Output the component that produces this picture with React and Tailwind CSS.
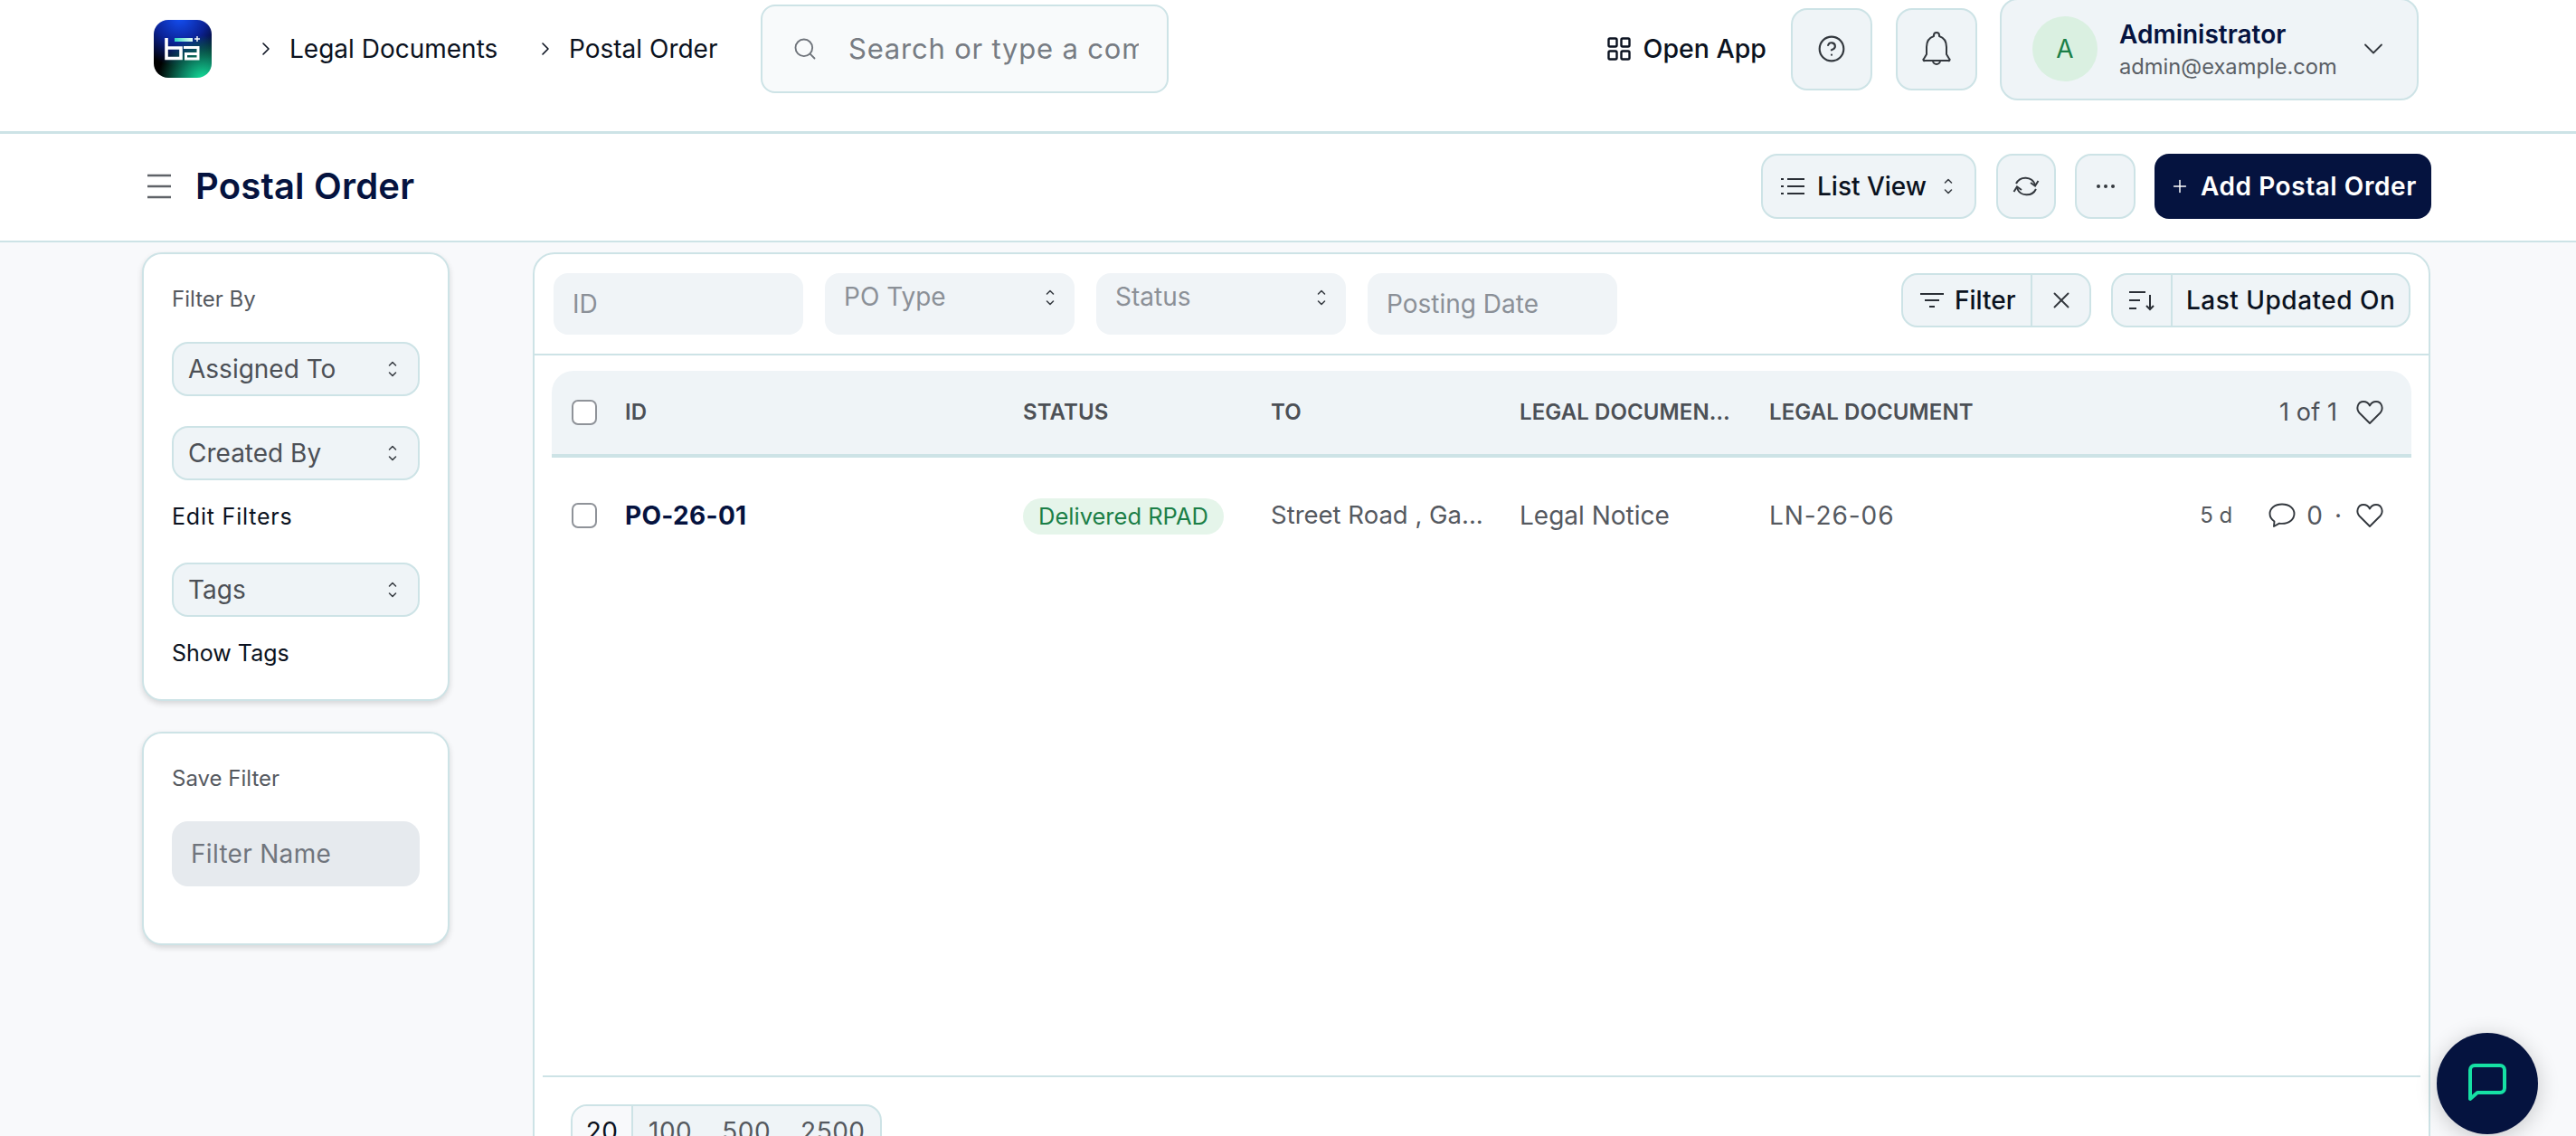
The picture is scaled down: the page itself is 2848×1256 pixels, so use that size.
import React from "react";
import { ChevronDown, ChevronRight, CircleHelp, Plus, Search, X } from "lucide-react";

const rows = [
	{
		id: "PO-26-01",
		status: "Delivered RPAD",
		to: "Street Road , Ga...",
		documentType: "Legal Notice",
		document: "LN-26-06",
		age: "5 d",
		comments: 0,
	},
];

function UpDown({ className }) {
	return (
		<svg viewBox="0 0 10 18" fill="none" stroke="currentColor" strokeWidth="1.6" strokeLinecap="round" strokeLinejoin="round" className={className}>
			<path d="M1.5 5L5 1.5L8.5 5" />
			<path d="M1.5 13L5 16.5L8.5 13" />
		</svg>
	);
}

function AppsIcon() {
	return (
		<svg viewBox="0 0 26 26" fill="none" stroke="#0b1220" strokeWidth="2.4" className="h-[26px] w-[26px] shrink-0">
			<rect x="1.5" y="1.5" width="9" height="9" rx="1.5" />
			<rect x="15.5" y="1.5" width="9" height="9" rx="1.5" />
			<rect x="1.5" y="15.5" width="9" height="9" rx="1.5" />
			<rect x="15.5" y="15.5" width="9" height="9" rx="1.5" />
		</svg>
	);
}

function BellIcon() {
	return (
		<svg viewBox="0 0 34 40" fill="none" stroke="#33383e" strokeWidth="2" strokeLinejoin="round" className="h-[40px] w-[34px]">
			<path d="M17 2c-1.500 0-3 1-3 3v1C8 8 6 12 6 18v8l-3 5a1 1 0 0 0 1 2h26a1 1 0 0 0 1-2l-3-5v-8c0-6-2-10-8-12V5c0-2-1.500-3-3-3z" />
			<path d="M13 33a4 4 0 0 0 8 0" />
		</svg>
	);
}

function SyncIcon() {
	return (
		<svg viewBox="0 0 30 26" fill="none" stroke="#33383e" strokeWidth="2" className="h-[26px] w-[30px]">
			<path d="M4 10A11.500 11.500 0 0 1 25 11" />
			<path d="M28.500 7L25 12.500L20 9" />
			<path d="M26 16A11.500 11.500 0 0 1 5 15" />
			<path d="M1.500 19L5 13.500L10 17" />
		</svg>
	);
}

function CommentIcon() {
	return (
		<svg viewBox="0 0 30 28" fill="none" stroke="#33383e" strokeWidth="1.9" strokeLinejoin="round" className="h-[28px] w-[30px] shrink-0">
			<path d="M15 1.500C7 1.500 1.500 6 1.500 12c0 3.500 2 6.500 5 8.500L6 26l6-3.300c1 .2 2 .2 3 .2 8 0 13.500-4.900 13.500-10.900S23 1.500 15 1.500z" />
		</svg>
	);
}

function HeartIcon() {
	return (
		<svg viewBox="0 0 30 28" fill="none" stroke="#33383e" strokeWidth="1.9" strokeLinejoin="round" className="h-[28px] w-[32px] shrink-0">
			<path d="M15 26L3.500 14.500C-.5 10 1.500 2 8 2c3.500 0 6 2.500 7 4.500C16 4.500 18.500 2 22 2c6.500 0 8.500 8 4.500 12.500z" />
		</svg>
	);
}

function Logo() {
	return (
		<div className="h-[64px] w-[64px] shrink-0 overflow-hidden rounded-[16px] bg-[radial-gradient(circle_at_85%_105%,#14e8a0_0%,#0b7a5e_28%,transparent_58%),radial-gradient(circle_at_45%_-5%,#1450f5_0%,#0b2296_38%,transparent_72%),linear-gradient(#000,#000)]">
			<svg viewBox="0 0 64 64" className="h-[64px] w-[64px]" fill="none">
				<defs>
					<linearGradient id="logoBar" x1="0" x2="1" y1="0" y2="0">
						<stop offset="0" stopColor="#2fd8c0" />
						<stop offset="1" stopColor="#e8fff6" />
					</linearGradient>
				</defs>
				<rect x="23" y="20" width="20" height="4" fill="url(#logoBar)" />
				<path d="M48 18v6M45 21h6" stroke="#fff" strokeWidth="1.4" />
				<path d="M14 20v22.500h16V31H14" stroke="#fff" strokeWidth="3.6" />
				<path d="M33 30.500h16v12.500H35.500v-5.500H49" stroke="#fff" strokeWidth="3" />
			</svg>
		</div>
	);
}

function HamburgerIcon() {
	return (
		<svg viewBox="0 0 28 28" fill="none" stroke="#5f6368" strokeWidth="2.4" className="h-[28px] w-[28px]">
			<path d="M1 2h26M1 14h26M1 26h26" />
		</svg>
	);
}

function ListIcon() {
	return (
		<svg viewBox="0 0 26 20" fill="none" stroke="#2a2f36" strokeWidth="2" className="h-[20px] w-[26px]">
			<path d="M0 2h3M7 2h19M0 10h3M7 10h19M0 18h3M7 18h19" />
		</svg>
	);
}

function FilterIcon() {
	return (
		<svg viewBox="0 0 26 20" fill="none" stroke="#2a2f36" strokeWidth="2" className="h-[20px] w-[26px]">
			<path d="M0 3h26M5 10h16M10 17h6" />
		</svg>
	);
}

function SortIcon() {
	return (
		<svg viewBox="0 0 28 24" fill="none" stroke="#2a2f36" strokeWidth="2" className="h-[24px] w-[28px]">
			<path d="M0 3h18M0 12h12M0 21h8" />
			<path d="M23 6v16M19 18l4 4l4-4" />
		</svg>
	);
}

function Dropdown({ label, className }) {
	return (
		<div className={`flex h-[60px] items-center justify-between rounded-[18px] border-2 border-[#cde3e6] bg-[#eff4f7] pl-[16px] pr-[23px] ${className}`}>
			<span className="text-[28px] text-[#4c5056]">{label}</span>
			<UpDown className="h-[18px] w-[10px] shrink-0 text-[#3a3f45]" />
		</div>
	);
}

function FilterInput({ label, select }) {
	return (
		<div className={`flex h-[68px] w-[276px] justify-between rounded-[16px] bg-[#f0f4f7] pl-[21px] pr-[22px] ${select ? "pt-[5px]" : "items-center"}`}>
			<span className="text-[28px] text-[#8b9097]">{label}</span>
			{select && <UpDown className="mt-[13px] h-[18px] w-[10px] shrink-0 text-[#3a3f45]" />}
		</div>
	);
}

export default function App() {
	return (
		<div className="h-[1256px] overflow-hidden bg-[#f8f9fb] font-['Inter',sans-serif] text-[28px] text-[#0b1220]">
			<header className="h-[148px] border-b-[3px] border-[#cde3e6] bg-white shadow-[0_2px_3px_rgba(0,0,0,0.08)]">
				<div className="flex h-[108px] items-center pl-[170px] pr-[174px]">
					<Logo />
					<ChevronRight className="ml-[48px] h-[24px] w-[24px] shrink-0" strokeWidth={1.6} />
					<span className="ml-[14px] w-[271px] shrink-0 whitespace-nowrap">Legal Documents</span>
					<ChevronRight className="h-[24px] w-[24px] shrink-0" strokeWidth={1.6} />
					<span className="ml-[14px] w-[212px] shrink-0 whitespace-nowrap">Postal Order</span>
					<div className="flex h-[98px] w-[451px] shrink-0 items-center rounded-[16px] border-2 border-[#cde3e6] bg-[#f8fafb] pl-[33px] pr-[31px]">
						<Search className="h-[28px] w-[28px] shrink-0 text-[#6f747b]" strokeWidth={1.6} />
						<div className="ml-[34px] overflow-hidden whitespace-nowrap text-[31px] tracking-[0.8px] text-[#777c83]">Search or type a command</div>
					</div>
					<div className="ml-auto flex items-center">
						<AppsIcon />
						<span className="ml-[14px] text-[28.5px] font-medium">Open App</span>
						<div className="ml-[27px] flex h-[91px] w-[90px] items-center justify-center rounded-[18px] border-2 border-[#cde3e6] bg-[#eff4f7]">
							<CircleHelp className="h-[32px] w-[32px] text-[#33383e]" strokeWidth={1.6} />
						</div>
						<div className="ml-[26px] flex h-[91px] w-[90px] items-center justify-center rounded-[18px] border-2 border-[#cde3e6] bg-[#eff4f7]">
							<BellIcon />
						</div>
						<div className="ml-[25px] flex h-[113px] w-[463px] items-center rounded-[20px] border-2 border-[#cde3e6] bg-[#eff4f7] pl-[34px] pr-[30px]">
							<div className="flex h-[72px] w-[72px] items-center justify-center rounded-full bg-[#daf0e1] text-[#1b7f47]">A</div>
							<div className="ml-[24px] pt-[3px]">
								<div className="text-[28px] font-semibold leading-[36px] text-[#05133f]">Administrator</div>
								<div className="text-[23.7px] leading-[36px] text-[#5a5f66]">admin@example.com</div>
							</div>
							<ChevronDown className="ml-auto h-[36px] w-[36px] text-[#33383e]" strokeWidth={1.2} />
						</div>
					</div>
				</div>
			</header>

			<div className="flex h-[120px] items-center justify-between border-b-2 border-[#cde3e6] bg-white pb-[2px] pl-[162px] pr-[160px]">
				<div className="flex items-center">
					<HamburgerIcon />
					<h1 className="ml-[26px] text-[40px] font-semibold tracking-[0.2px] text-[#05133f]">Postal Order</h1>
				</div>
				<div className="flex h-[72px] items-stretch">
					<div className="flex w-[238px] items-center rounded-[18px] border-2 border-[#cde3e6] bg-[#eff4f7] pl-[20px] pr-[24px]">
						<ListIcon />
						<span className="ml-[14px] font-medium">List View</span>
						<UpDown className="ml-auto h-[18px] w-[10px] text-[#3a3f45]" />
					</div>
					<div className="ml-[22px] flex w-[66px] items-center justify-center rounded-[18px] border-2 border-[#cde3e6] bg-[#eff4f7]">
						<SyncIcon />
					</div>
					<div className="ml-[21px] flex w-[67px] items-center justify-center rounded-[18px] border-2 border-[#cde3e6] bg-[#eff4f7]">
						<span className="flex gap-[4px]">
							<i className="h-[4px] w-[4px] rounded-full bg-[#33383e]" />
							<i className="h-[4px] w-[4px] rounded-full bg-[#33383e]" />
							<i className="h-[4px] w-[4px] rounded-full bg-[#33383e]" />
						</span>
					</div>
					<div className="ml-[21px] flex w-[306px] items-center rounded-[16px] bg-[#05133f] pl-[17px] font-semibold text-white">
						<Plus className="h-[22px] w-[22px] shrink-0" strokeWidth={1.6} />
						<span className="ml-[12px] whitespace-nowrap tracking-[0.56px]">Add Postal Order</span>
					</div>
				</div>
			</div>

			<div className="flex pl-[157px] pt-[11px]">
				<aside className="w-[340px] shrink-0">
					<div className="h-[496px] rounded-[22px] border-2 border-[#cde3e6] bg-white px-[31px] pt-[36px] shadow-[0_3px_6px_rgba(0,0,0,0.14)]">
						<div className="text-[24px] leading-[28px] text-[#55595f]">Filter By</div>
						<Dropdown label="Assigned To" className="mt-[33px]" />
						<Dropdown label="Created By" className="mt-[33px]" />
						<div className="mt-[23px] text-[25px] leading-[34px] tracking-[0.8px]">Edit Filters</div>
						<Dropdown label="Tags" className="mt-[34px]" />
						<div className="mt-[23px] text-[25px] leading-[34px]">Show Tags</div>
					</div>
					<div className="mt-[34px] h-[236px] rounded-[22px] border-2 border-[#cde3e6] bg-white px-[31px] pt-[36px] shadow-[0_3px_6px_rgba(0,0,0,0.14)]">
						<div className="text-[24px] leading-[28px] text-[#55595f]">Save Filter</div>
						<div className="mt-[33px] flex h-[72px] w-[274px] items-center rounded-[18px] bg-[#e6eaee] pl-[21px] tracking-[0.3px] text-[#70757d]">Filter Name</div>
					</div>
				</aside>

				<main className="ml-[92px] h-[1000px] w-[2098px] shrink-0 rounded-[24px] border-2 border-[#cde3e6] bg-white">
					<div className="flex h-[112px] justify-between border-b-2 border-[#cde3e6] pl-[21px] pr-[20px] pt-[21px]">
						<div className="flex gap-[24px]">
							<FilterInput label="ID" />
							<FilterInput label="PO Type" select />
							<FilterInput label="Status" select />
							<FilterInput label="Posting Date" />
						</div>
						<div className="flex h-[60px] gap-[22px]">
							<div className="flex w-[210px] rounded-[18px] border-2 border-[#cde3e6] bg-[#eff4f7]">
								<div className="flex w-[143px] items-center border-r-2 border-[#cde3e6] pl-[19px] font-medium">
									<FilterIcon />
									<span className="ml-[12px]">Filter</span>
								</div>
								<div className="flex flex-1 items-center justify-center">
									<X className="h-[30px] w-[30px] text-[#33383e]" strokeWidth={1.5} />
								</div>
							</div>
							<div className="flex w-[331px] rounded-[18px] border-2 border-[#cde3e6] bg-[#eff4f7]">
								<div className="flex w-[66px] items-center justify-center border-r-2 border-[#cde3e6]">
									<SortIcon />
								</div>
								<div className="flex flex-1 items-center whitespace-nowrap pl-[15px] font-medium tracking-[0.5px]">Last Updated On</div>
							</div>
						</div>
					</div>

					<div className="px-[19px] pt-[17px]">
						<div className="flex h-[96px] items-center rounded-t-[24px] border-b-4 border-[#cde3e6] bg-[#eff4f7] pl-[22px] pr-[30px] text-[24px] font-semibold tracking-[0.1px] text-[#4c5056]">
							<input type="checkbox" className="h-[28px] w-[28px] shrink-0 appearance-none rounded-[7px] border-2 border-[#8f9399] bg-white" />
							<span className="ml-[31px] w-[440px] shrink-0">ID</span>
							<span className="w-[274px] shrink-0">STATUS</span>
							<span className="w-[275px] shrink-0">TO</span>
							<span className="mr-[40px] w-[236px] shrink-0 overflow-hidden text-ellipsis whitespace-nowrap">LEGAL DOCUMENT TYPE</span>
							<span className="whitespace-nowrap">LEGAL DOCUMENT</span>
							<span className="ml-auto whitespace-nowrap text-[27px] font-normal">1 of 1</span>
							<span className="ml-[20px]">
								<HeartIcon />
							</span>
						</div>
						{rows.map((row) => (
							<div key={row.id} className="flex h-[128px] items-center pl-[22px] pr-[30px] text-[#55595f]">
								<input type="checkbox" className="h-[28px] w-[28px] shrink-0 appearance-none rounded-[7px] border-2 border-[#8f9399] bg-white" />
								<span className="ml-[31px] w-[440px] shrink-0 font-bold tracking-[0.3px] text-[#05133f]">{row.id}</span>
								<span className="w-[274px] shrink-0">
									<span className="inline-flex h-[40px] w-[222px] items-center justify-center rounded-full bg-[#e5f5ea] text-[25.5px] text-[#1b7f47]">{row.status}</span>
								</span>
								<span className="w-[275px] shrink-0 whitespace-nowrap text-[27.5px]">{row.to}</span>
								<span className="w-[276px] shrink-0">{row.documentType}</span>
								<span className="whitespace-nowrap tracking-[0.9px]">{row.document}</span>
								<span className="ml-auto text-[24px]">{row.age}</span>
								<span className="ml-[40px]">
									<CommentIcon />
								</span>
								<span className="ml-[12px]">{row.comments}</span>
								<span className="ml-[13px]">·</span>
								<span className="ml-[15px]">
									<HeartIcon />
								</span>
							</div>
						))}
					</div>

					<div className="mx-[9px] mt-[555px] border-t-2 border-[#cde3e6] pl-[31px] pt-[30px]">
						<div className="flex h-[60px] w-[344px] overflow-hidden rounded-[18px] border-2 border-[#cde3e6] bg-[#eff4f7] tracking-[0.5px] text-[#55595f]">
							<span className="flex w-[67px] items-center justify-center border-r-2 border-[#cde3e6] bg-[#f8f9fb] text-[#0b1220]">20</span>
							<span className="ml-[17px] flex items-center">100</span>
							<span className="ml-[33px] flex items-center">500</span>
							<span className="ml-[33px] flex items-center">2500</span>
						</div>
					</div>
				</main>
			</div>

			<button className="absolute left-[2694px] top-[1142px] flex h-[112px] w-[112px] items-center justify-center rounded-full bg-[#05133f] shadow-[0_4px_24px_rgba(0,0,0,0.2)]">
				<svg viewBox="0 0 42 44" fill="none" stroke="#16e0a4" strokeWidth="4" className="h-[44px] w-[42px]">
					<path d="M2 39V7a5 5 0 0 1 5-5h28a5 5 0 0 1 5 5v20a5 5 0 0 1-5 5H10z" strokeLinejoin="round" />
				</svg>
			</button>
		</div>
	);
}
